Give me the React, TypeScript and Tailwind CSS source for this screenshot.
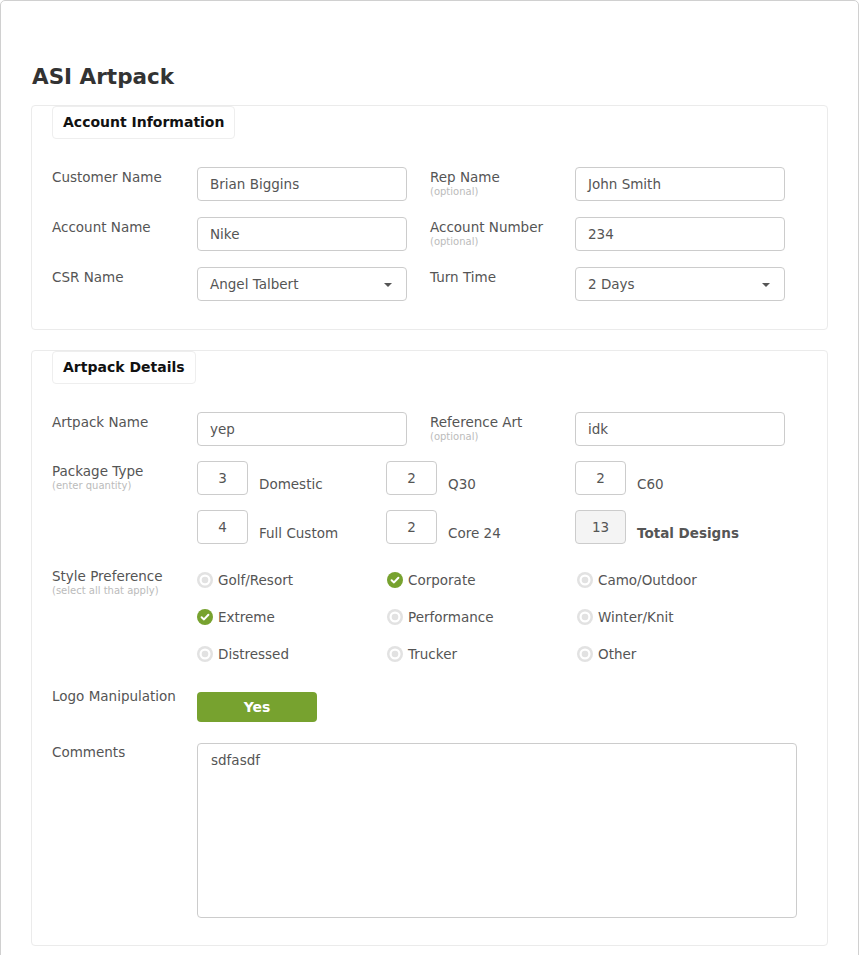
import React from 'react';

const font = { fontFamily: '"DejaVu Sans", "Liberation Sans", sans-serif' };

function Field({
  label,
  hint,
  value,
  select
}: {
  label: string;
  hint?: string;
  value: string;
  select?: boolean;
}) {
  return (
    <div className="flex">
      <div className="w-[145px] shrink-0 pt-[2px]">
        <div className="text-[13.5px] leading-[17px] text-[#555]">{label}</div>
        {hint && <div className="text-[10px] leading-[12px] text-[#bbb]">{hint}</div>}
      </div>
      <div className="relative flex h-[34px] w-[210px] items-center rounded-[4px] border border-[#ccc] bg-white px-[12px] text-[13.5px] text-[#555]">
        {value}
        {select && (
          <span className="absolute right-[14px] top-[15px] h-0 w-0 border-x-[4px] border-t-[4px] border-x-transparent border-t-[#555]" />
        )}
      </div>
    </div>
  );
}

function Legend({ children }: { children: string }) {
  return (
    <div className="inline-flex h-[33px] items-center rounded-[4px] border border-[#eee] bg-white px-[10px] text-[14px] font-bold text-[#111]">
      {children}
    </div>
  );
}

function Qty({ n, label, total }: { n: string; label: string; total?: boolean }) {
  return (
    <div className="flex w-[189px] items-start">
      <div
        className={[
          'flex h-[34px] w-[51px] items-start justify-center rounded-[4px] border border-[#ccc] pt-[8px] text-[13.5px] leading-[16px] text-[#555]',
          total ? 'bg-[#f4f4f4]' : 'bg-white'
        ].join(' ')}
      >
        {n}
      </div>
      <div className={['ml-[11px] pt-[15px] text-[13.5px] leading-[17px]', total ? 'font-bold text-[#555]' : 'text-[#555]'].join(' ')}>
        {label}
      </div>
    </div>
  );
}

function Check({ label, on }: { label: string; on?: boolean }) {
  return (
    <div className="flex h-[24px] w-[190px] items-center gap-[5px] text-[13.5px] text-[#555]">
      {on ? (
        <svg width="16" height="16" viewBox="0 0 16 16">
          <circle cx="8" cy="8" r="8" fill="#77a22f" />
          <path d="M4.6 8.2 L7 10.4 L11.4 5.8" fill="none" stroke="#fff" strokeWidth="2" strokeLinecap="round" strokeLinejoin="round" />
        </svg>
      ) : (
        <svg width="16" height="16" viewBox="0 0 16 16">
          <circle cx="8" cy="8" r="8" fill="#e2e2e2" />
          <circle cx="8" cy="8" r="5.5" fill="#fff" />
          <circle cx="8" cy="8" r="3.3" fill="#e2e2e2" />
        </svg>
      )}
      <span>{label}</span>
    </div>
  );
}

export default function App() {
  return (
    <div className="bg-white" style={font}>
      <div className="min-h-[1000px] w-[859px] rounded-t-[5px] border border-[#d0d0d0] px-[30px] pt-[61px]">
        <h1 className="ml-[1px] text-[21.5px] font-bold leading-[30px] text-[#333]">ASI Artpack</h1>

        <section className="mt-[13px] rounded-[4px] border border-[#ebebeb] px-[20px] pb-[28px]">
          <Legend>Account Information</Legend>
          <div className="mt-[28px] flex flex-col gap-[16px]">
            <div className="flex gap-[23px]">
              <Field label="Customer Name" value="Brian Biggins" />
              <Field label="Rep Name" hint="(optional)" value="John Smith" />
            </div>
            <div className="flex gap-[23px]">
              <Field label="Account Name" value="Nike" />
              <Field label="Account Number" hint="(optional)" value="234" />
            </div>
            <div className="flex gap-[23px]">
              <Field label="CSR Name" value="Angel Talbert" select />
              <Field label="Turn Time" value="2 Days" select />
            </div>
          </div>
        </section>

        <section className="mt-[20px] rounded-[4px] border border-[#ebebeb] px-[20px] pb-[27px]">
          <Legend>Artpack Details</Legend>
          <div className="mt-[28px] flex gap-[23px]">
            <Field label="Artpack Name" value="yep" />
            <Field label="Reference Art" hint="(optional)" value="idk" />
          </div>

          <div className="mt-[15px] flex">
            <div className="w-[145px] shrink-0 pt-[2px]">
              <div className="text-[13.5px] leading-[17px] text-[#555]">Package Type</div>
              <div className="text-[10px] leading-[12px] text-[#bbb]">(enter quantity)</div>
            </div>
            <div className="flex flex-col gap-[15px]">
              <div className="flex">
                <Qty n="3" label="Domestic" />
                <Qty n="2" label="Q30" />
                <Qty n="2" label="C60" />
              </div>
              <div className="flex">
                <Qty n="4" label="Full Custom" />
                <Qty n="2" label="Core 24" />
                <Qty n="13" label="Total Designs" total />
              </div>
            </div>
          </div>

          <div className="mt-[24px] flex">
            <div className="w-[145px] shrink-0">
              <div className="text-[13.5px] leading-[17px] text-[#555]">Style Preference</div>
              <div className="text-[10px] leading-[12px] text-[#bbb]">(select all that apply)</div>
            </div>
            <div className="flex flex-col gap-[13px]">
              <div className="flex">
                <Check label="Golf/Resort" />
                <Check label="Corporate" on />
                <Check label="Camo/Outdoor" />
              </div>
              <div className="flex">
                <Check label="Extreme" on />
                <Check label="Performance" />
                <Check label="Winter/Knit" />
              </div>
              <div className="flex">
                <Check label="Distressed" />
                <Check label="Trucker" />
                <Check label="Other" />
              </div>
            </div>
          </div>

          <div className="mt-[26px] flex">
            <div className="-mt-[4px] w-[145px] shrink-0 text-[13.5px] leading-[17px] text-[#555]">Logo Manipulation</div>
            <button className="h-[30px] w-[120px] rounded-[4px] bg-[#77a22f] text-[14px] font-bold text-white">Yes</button>
          </div>

          <div className="mt-[21px] flex">
            <div className="w-[145px] shrink-0 pt-[1px] text-[13.5px] leading-[17px] text-[#555]">Comments</div>
            <div className="h-[175px] w-[600px] rounded-[4px] border border-[#ccc] px-[13px] py-[6px] text-[13.5px] text-[#555]">
              sdfasdf
            </div>
          </div>
        </section>
      </div>
    </div>
  );
}
